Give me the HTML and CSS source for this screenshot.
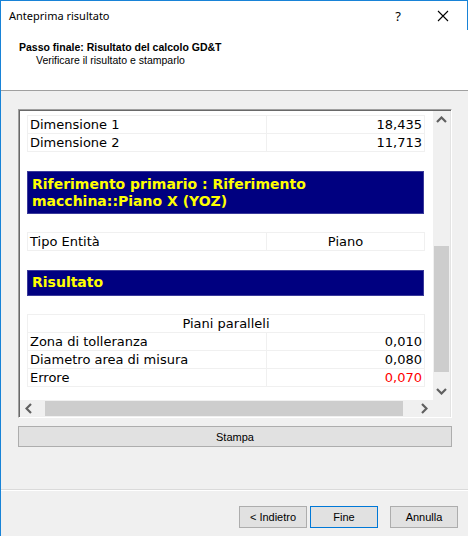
FILE: index.html
```html
<!DOCTYPE html>
<html>
<head>
<meta charset="utf-8">
<link rel="stylesheet" href="styles.css">
</head>
<body>
<div class="window">
  <div class="titlebar">
    <span class="title">Anteprima risultato</span>
    <span class="help">?</span>
    <span class="close"><svg width="12" height="12" viewBox="0 0 12 12"><path d="M1 1L11 11M11 1L1 11" stroke="#000" stroke-width="1.1" fill="none"/></svg></span>
  </div>
  <div class="header">
    <div class="h-title">Passo finale: Risultato del calcolo GD&amp;T</div>
    <div class="h-sub">Verificare il risultato e stamparlo</div>
  </div>
  <div class="main">
    <div class="panel">
      <div class="view">
        <table class="grid">
          <colgroup><col class="c1"><col class="c2"></colgroup>
          <tr><td>Dimensione 1</td><td class="num">18,435</td></tr>
          <tr><td>Dimensione 2</td><td class="num">11,713</td></tr>
        </table>
        <div class="band band-2">Riferimento primario : Riferimento macchina::Piano X (YOZ)</div>
        <table class="grid">
          <colgroup><col class="c1"><col class="c2"></colgroup>
          <tr><td>Tipo Entità</td><td class="center">Piano</td></tr>
        </table>
        <div class="band">Risultato</div>
        <table class="grid">
          <colgroup><col class="c1"><col class="c2"></colgroup>
          <tr><td class="center" colspan="2">Piani paralleli</td></tr>
          <tr><td>Zona di tolleranza</td><td class="num">0,010</td></tr>
          <tr><td>Diametro area di misura</td><td class="num">0,080</td></tr>
          <tr><td>Errore</td><td class="num err">0,070</td></tr>
        </table>
      </div>
      <div class="vscroll">
        <span class="arrow"><svg width="11" height="7" viewBox="0 0 11 7"><path d="M1 6L5.5 1.5L10 6" stroke="#606060" stroke-width="2.2" fill="none"/></svg></span>
        <div class="vtrack"><div class="vthumb"></div></div>
        <span class="arrow"><svg width="11" height="7" viewBox="0 0 11 7"><path d="M1 1L5.5 5.5L10 1" stroke="#606060" stroke-width="2.2" fill="none"/></svg></span>
      </div>
      <div class="hscroll">
        <span class="harrow"><svg width="7" height="11" viewBox="0 0 7 11"><path d="M6 1L1.5 5.5L6 10" stroke="#606060" stroke-width="2.2" fill="none"/></svg></span>
        <div class="htrack"><div class="hthumb"></div></div>
        <span class="harrow"><svg width="7" height="11" viewBox="0 0 7 11"><path d="M1 1L5.5 5.5L1 10" stroke="#606060" stroke-width="2.2" fill="none"/></svg></span>
      </div>
      <div class="corner"></div>
    </div>
    <button class="btn stampa">Stampa</button>
  </div>
  <div class="footer">
    <button class="btn fbtn">&lt; Indietro</button>
    <button class="btn fbtn default">Fine</button>
    <button class="btn fbtn annulla">Annulla</button>
  </div>
</div>
</body>
</html>
```

FILE: styles.css
```css
* { box-sizing: border-box; }
html, body { margin: 0; padding: 0; }
body {
  width: 468px;
  height: 536px;
  overflow: hidden;
  background: #f0f0f0;
  font-family: "Liberation Sans", Arial, sans-serif;
  font-size: 11px;
  color: #000;
}
.window {
  height: 536px;
  border-left: 1px solid #1883d7;
  border-top: 1px solid #1883d7;
  display: flex;
  flex-direction: column;
}
.titlebar {
  height: 29px;
  flex: none;
  background: #fff;
  border-right: 1px solid #1883d7;
  display: flex;
  align-items: center;
  font-family: "Noto Sans", sans-serif;
  font-size: 11px;
}
.title { margin-left: 8px; flex: 1; }
.help { width: 14px; text-align: center; margin-right: 32px; font-size: 13px; }
.close { width: 12px; height: 12px; margin-right: 18px; display: flex; }
.header {
  height: 61px;
  flex: none;
  background: #fff;
  border-bottom: 1px solid #a0a0a0;
  padding: 11px 0 0 18px;
  font-size: 10.5px;
}
.h-title { font-weight: bold; line-height: 13px; }
.h-sub { padding-left: 17px; line-height: 13px; }
.main {
  height: 399px;
  flex: none;
  padding: 18px 16px 0 17px;
  border-bottom: 1px solid #dadada;
}
.panel {
  height: 309px;
  border-top: 1px solid #a0a0a0;
  border-left: 1px solid #a0a0a0;
  border-right: 1px solid #fff;
  border-bottom: 1px solid #fff;
  box-shadow: inset 1px 1px 0 #696969, inset -1px -1px 0 #e3e3e3;
  padding: 1px;
  display: grid;
  grid-template-columns: 413px 17px;
  grid-template-rows: 289px 17px;
}
.view {
  background: #fff;
  padding: 4px 9px 0 7px;
  overflow: hidden;
  font-family: "DejaVu Sans", Verdana, sans-serif;
  font-size: 13px;
  color: #000;
}
.grid {
  width: 397px;
  border-collapse: collapse;
  table-layout: fixed;
}
.grid td {
  border: 1px solid #f0f0f0;
  height: 18px;
  padding: 0 2px;
  line-height: 16px;
  white-space: nowrap;
}
.c1 { width: 239px; }
.c2 { width: 158px; }
.num { text-align: right; }
.center { text-align: center; }
.err { color: #ff0000; }
.band {
  margin: 19px 0 18px;
  width: 397px;
  height: 26px;
  background: #000080;
  border: 1px solid #3a3a9a;
  color: #ffff00;
  font-weight: bold;
  font-size: 14px;
  line-height: 17px;
  padding: 3px 4px 0;
}
.band-2 { height: 43px; padding-top: 4px; }
.vscroll {
  background: #f0f0f0;
  display: flex;
  flex-direction: column;
  align-items: center;
}
.arrow { height: 17px; display: flex; align-items: center; justify-content: center; flex: none; }
.vtrack { flex: 1; width: 100%; padding: 0 1px; }
.vthumb { margin-top: 118px; height: 126px; background: #cdcdcd; }
.hscroll {
  background: #f0f0f0;
  display: flex;
  align-items: center;
}
.harrow { width: 17px; height: 17px; display: flex; align-items: center; justify-content: center; flex: none; }
.htrack { flex: 1; height: 100%; padding: 1px 0; }
.hthumb { margin-left: 8px; width: 358px; height: 15px; background: #cdcdcd; }
.corner { background: #f0f0f0; }
.btn {
  font-family: "Liberation Sans", Arial, sans-serif;
  font-size: 11px;
  color: #000;
  background: #e1e1e1;
  border: 1px solid #adadad;
  padding: 0;
  margin: 0;
}
.stampa {
  display: block;
  width: 434px;
  height: 21px;
  margin: 8px 0 0 0;
}
.footer {
  flex: 1;
  border-top: 1px solid #fff;
  display: flex;
  padding: 15px 0 0 238px;
}
.fbtn { width: 68px; height: 22px; margin-right: 3px; }
.default { border-color: #0078d7; }
.annulla { margin-left: 9px; }
```
